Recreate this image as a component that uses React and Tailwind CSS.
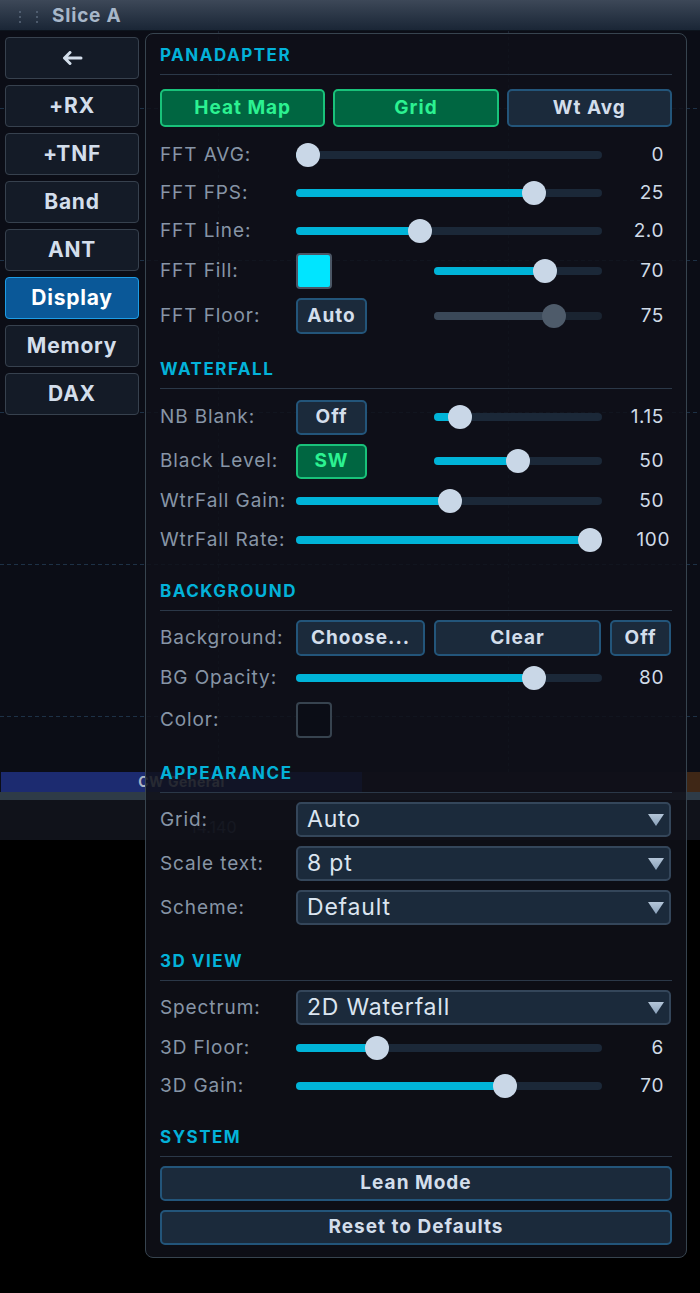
import React from "react"

const sideButtons = ["+RX", "+TNF", "Band", "ANT", "Display", "Memory", "DAX"]

function Slider({ full, frac, disabled }) {
  const w = full ? 306 : 168
  const c = 12 + frac * (w - 24)
  return (
    <div className={`relative flex h-[24px] shrink-0 items-center ${full ? "w-[306px]" : "w-[168px]"}`}>
      <div className={`h-[8px] w-full rounded-full ${disabled ? "bg-[#1a2431]" : "bg-[#1b2838]"}`} />
      <div
        className={`absolute left-0 top-[8px] h-[8px] rounded-full ${disabled ? "bg-[#3a4858]" : "bg-[#00b4d8]"}`}
        style={{ width: c }}
      />
      <div
        className={`absolute top-0 h-[24px] w-[24px] rounded-full ${disabled ? "bg-[#4e5b6a]" : "bg-[#c9d7e7]"}`}
        style={{ left: c - 12 }}
      />
    </div>
  )
}

function Header({ title, className }) {
  return (
    <div className={`h-[30px] border-b border-[#2b3848] ${className}`}>
      <div className="h-[20px] text-[17px] font-bold leading-[20px] tracking-[1.5px] text-[#03b2d9]">{title}</div>
    </div>
  )
}

function Label({ children }) {
  return <span className="w-[136px] shrink-0 pt-px text-[19px] tracking-[0.9px] text-[#8795a6]">{children}</span>
}

function Value({ children, className = "pr-[7px]" }) {
  return <span className={`w-[69px] shrink-0 pt-px text-right text-[19px] tracking-[0.6px] text-[#d0dbe7] ${className}`}>{children}</span>
}

function Btn({ children, green, className }) {
  return (
    <div
      className={`flex items-center justify-center rounded-[5px] border-2 text-[19px] font-bold tracking-[1px] ${
        green ? "border-[#19c27a] bg-[#006641] text-[#2cf291]" : "border-[#23557a] bg-[#1b2a3b] text-[#d3deeb]"
      } ${className}`}
    >
      {children}
    </div>
  )
}

function Select({ children }) {
  return (
    <div className="flex h-[35px] w-[375px] items-center justify-between rounded-[5px] border-2 border-[#34465a] bg-[#1b2a3b] pl-[9px] pr-[5px]">
      <span className="text-[23px] tracking-[0.8px] text-[#dbe5f0]">{children}</span>
      <svg width="16" height="12" viewBox="0 0 16 12">
        <defs>
          <linearGradient id="tri" x1="0" y1="0" x2="0" y2="1">
            <stop offset="0" stopColor="#b3c5d8" />
            <stop offset="1" stopColor="#8aa1ba" />
          </linearGradient>
        </defs>
        <polygon points="0,0 16,0 8,12" fill="url(#tri)" />
      </svg>
    </div>
  )
}

function SliderRow({ label, value, frac, className, valueCls }) {
  return (
    <div className={`flex h-[34px] items-center ${className}`}>
      <Label>{label}</Label>
      <div className="flex w-[306px] items-center">
        <Slider full frac={frac} />
      </div>
      <Value className={valueCls}>{value}</Value>
    </div>
  )
}

function ControlRow({ label, value, frac, disabled, control, className }) {
  return (
    <div className={`flex h-[36px] items-center ${className}`}>
      <Label>{label}</Label>
      <div className="flex w-[306px] items-center justify-between">
        {control}
        <Slider frac={frac} disabled={disabled} />
      </div>
      <Value>{value}</Value>
    </div>
  )
}

function SelectRow({ label, value, className }) {
  return (
    <div className={`flex h-[35px] items-center ${className}`}>
      <Label>{label}</Label>
      <Select>{value}</Select>
    </div>
  )
}

const dash = "h-px w-full bg-[image:repeating-linear-gradient(90deg,#1d3146_0_4px,transparent_4px_7px)]"
const dot = "w-px bg-[image:repeating-linear-gradient(180deg,#1a2232_0_3px,transparent_3px_6px)]"

export default function App() {
  return (
    <div className="flex h-[1293px] w-[700px] flex-col overflow-hidden bg-black font-['Inter',sans-serif]">
      {/* Slice title bar */}
      <div className="flex h-[31px] shrink-0 items-center gap-[14px] border-b border-[#0d141d] bg-gradient-to-b from-[#3d4858] to-[#1a2636] pl-[19px] pt-[3px]">
        <div className="flex gap-[15px]">
          {[0, 1].map(i => (
            <div key={i} className="flex flex-col gap-[3px]">
              <span className="h-[2px] w-[2px] rounded-full bg-[#5b6a7c]" />
              <span className="h-[2px] w-[2px] rounded-full bg-[#5b6a7c]" />
              <span className="h-[2px] w-[2px] rounded-full bg-[#5b6a7c]" />
            </div>
          ))}
        </div>
        <span className="text-[19px] font-bold tracking-[0.8px] text-[#a7b7c9]">Slice A</span>
      </div>

      <div className="relative flex-1">
        {/* panadapter canvas behind the overlay */}
        <div className="absolute inset-x-0 top-0 flex flex-col">
          <div className="relative h-[741px] bg-[#0b0d16]">
            <div className={`absolute left-0 top-[77px] ${dash}`} />
            <div className={`absolute left-0 top-[229px] ${dash}`} />
            <div className={`absolute left-0 top-[381px] ${dash}`} />
            <div className={`absolute left-0 top-[533px] ${dash}`} />
            <div className={`absolute left-0 top-[685px] ${dash}`} />
            <div className={`absolute bottom-0 left-[218px] top-0 ${dot}`} />
            <div className={`absolute bottom-0 left-[508px] top-0 ${dot}`} />
          </div>
          <div className="flex h-[20px] bg-[#0b0d16]">
            <div className="ml-px flex w-[361px] items-center justify-center bg-[#1c2b70] text-[14px] font-bold leading-[14px] tracking-[0.5px] text-[#aab4c4]">
              CW General
            </div>
            <div className="flex-1 bg-[#17131b]" />
            <div className="w-[14px] bg-[#3f2716]" />
          </div>
          <div className="h-[8px] bg-[#2e3b47]" />
          <div className="h-[40px] bg-[#10121a] pl-[190px] pt-[19px] text-[16px] leading-[16px] text-[#3f4756]">14.140</div>
        </div>

        {/* controls */}
        <div className="relative flex items-start">
          <div className="ml-[5px] mt-[6px] flex w-[134px] flex-col gap-[6px]">
            <div className="flex h-[42px] items-center justify-center rounded-[4px] border border-[#37414e] bg-[#141b27]">
              <svg width="21" height="14" viewBox="0 0 21 14" fill="none" stroke="#d3deeb" strokeWidth="3" strokeLinecap="round" strokeLinejoin="round">
                <path d="M19 7H2.5M8 1.5 2.5 7 8 12.5" />
              </svg>
            </div>
            {sideButtons.map(b => (
              <div
                key={b}
                className={`flex h-[42px] items-center justify-center rounded-[4px] border text-[21px] font-bold tracking-[0.8px] ${
                  b === "Display" ? "border-[#1e9de6] bg-[#0a5898] text-white" : "border-[#37414e] bg-[#141b27] text-[#d3deeb]"
                }`}
              >
                {b}
              </div>
            ))}
          </div>

          <div className="ml-[6px] mt-[2px] flex w-[542px] flex-col rounded-[8px] border border-[#37444f] bg-[#0f1119]/85 px-[14px] pb-[12px] pt-[11px]">
            <Header title="PANADAPTER" />
            <div className="mt-[14px] grid h-[38px] grid-cols-3 gap-[8px]">
              <Btn green>Heat Map</Btn>
              <Btn green>Grid</Btn>
              <Btn>Wt Avg</Btn>
            </div>
            <SliderRow className="mt-[11px]" label="FFT AVG:" value="0" frac={0} />
            <SliderRow className="mt-[4px]" label="FFT FPS:" value="25" frac={0.801} />
            <SliderRow className="mt-[4px]" label="FFT Line:" value="2.0" frac={0.397} />
            <ControlRow
              className="mt-[5px]"
              label="FFT Fill:"
              value="70"
              frac={0.69}
              control={<div className="h-[36px] w-[36px] rounded-[4px] border-2 border-[#4b5766] bg-[#00e5ff]" />}
            />
            <ControlRow
              className="mt-[9px]"
              label="FFT Floor:"
              value="75"
              frac={0.75}
              disabled
              control={<Btn className="h-[36px] w-[71px]">Auto</Btn>}
            />

            <Header title="WATERFALL" className="mt-[25px]" />
            <ControlRow className="mt-[10px]" label="NB Blank:" value="1.15" frac={0.097} control={<Btn className="h-[35px] w-[71px]">Off</Btn>} />
            <ControlRow className="mt-[8px]" label="Black Level:" value="50" frac={0.5} control={<Btn green className="h-[35px] w-[71px]">SW</Btn>} />
            <SliderRow className="mt-[5px]" label="WtrFall Gain:" value="50" frac={0.504} />
            <SliderRow className="mt-[5px]" label="WtrFall Rate:" value="100" frac={1} valueCls="pr-[1px]" />

            <Header title="BACKGROUND" className="mt-[24px]" />
            <div className="mt-[9px] flex h-[36px] items-center">
              <Label>Background:</Label>
              <div className="flex h-[36px] w-[375px] gap-[9px]">
                <Btn className="w-[129px]">Choose...</Btn>
                <Btn className="w-[167px]">Clear</Btn>
                <Btn className="w-[61px]">Off</Btn>
              </div>
            </div>
            <SliderRow className="mt-[5px]" label="BG Opacity:" value="80" frac={0.8} />
            <div className="mt-[7px] flex h-[36px] items-center">
              <Label>Color:</Label>
              <div className="h-[36px] w-[36px] rounded-[4px] border-2 border-[#37434f] bg-[#0b0d16]" />
            </div>

            <Header title="APPEARANCE" className="mt-[25px]" />
            <SelectRow className="mt-[9px]" label="Grid:" value="Auto" />
            <SelectRow className="mt-[9px]" label="Scale text:" value="8 pt" />
            <SelectRow className="mt-[9px]" label="Scheme:" value="Default" />

            <Header title="3D VIEW" className="mt-[26px]" />
            <SelectRow className="mt-[9px]" label="Spectrum:" value="2D Waterfall" />
            <SliderRow className="mt-[6px]" label="3D Floor:" value="6" frac={0.245} />
            <SliderRow className="mt-[4px]" label="3D Gain:" value="70" frac={0.7} />

            <Header title="SYSTEM" className="mt-[24px]" />
            <Btn className="mt-[9px] h-[35px]">Lean Mode</Btn>
            <Btn className="mt-[9px] h-[35px]">Reset to Defaults</Btn>
          </div>
        </div>
      </div>
    </div>
  )
}
